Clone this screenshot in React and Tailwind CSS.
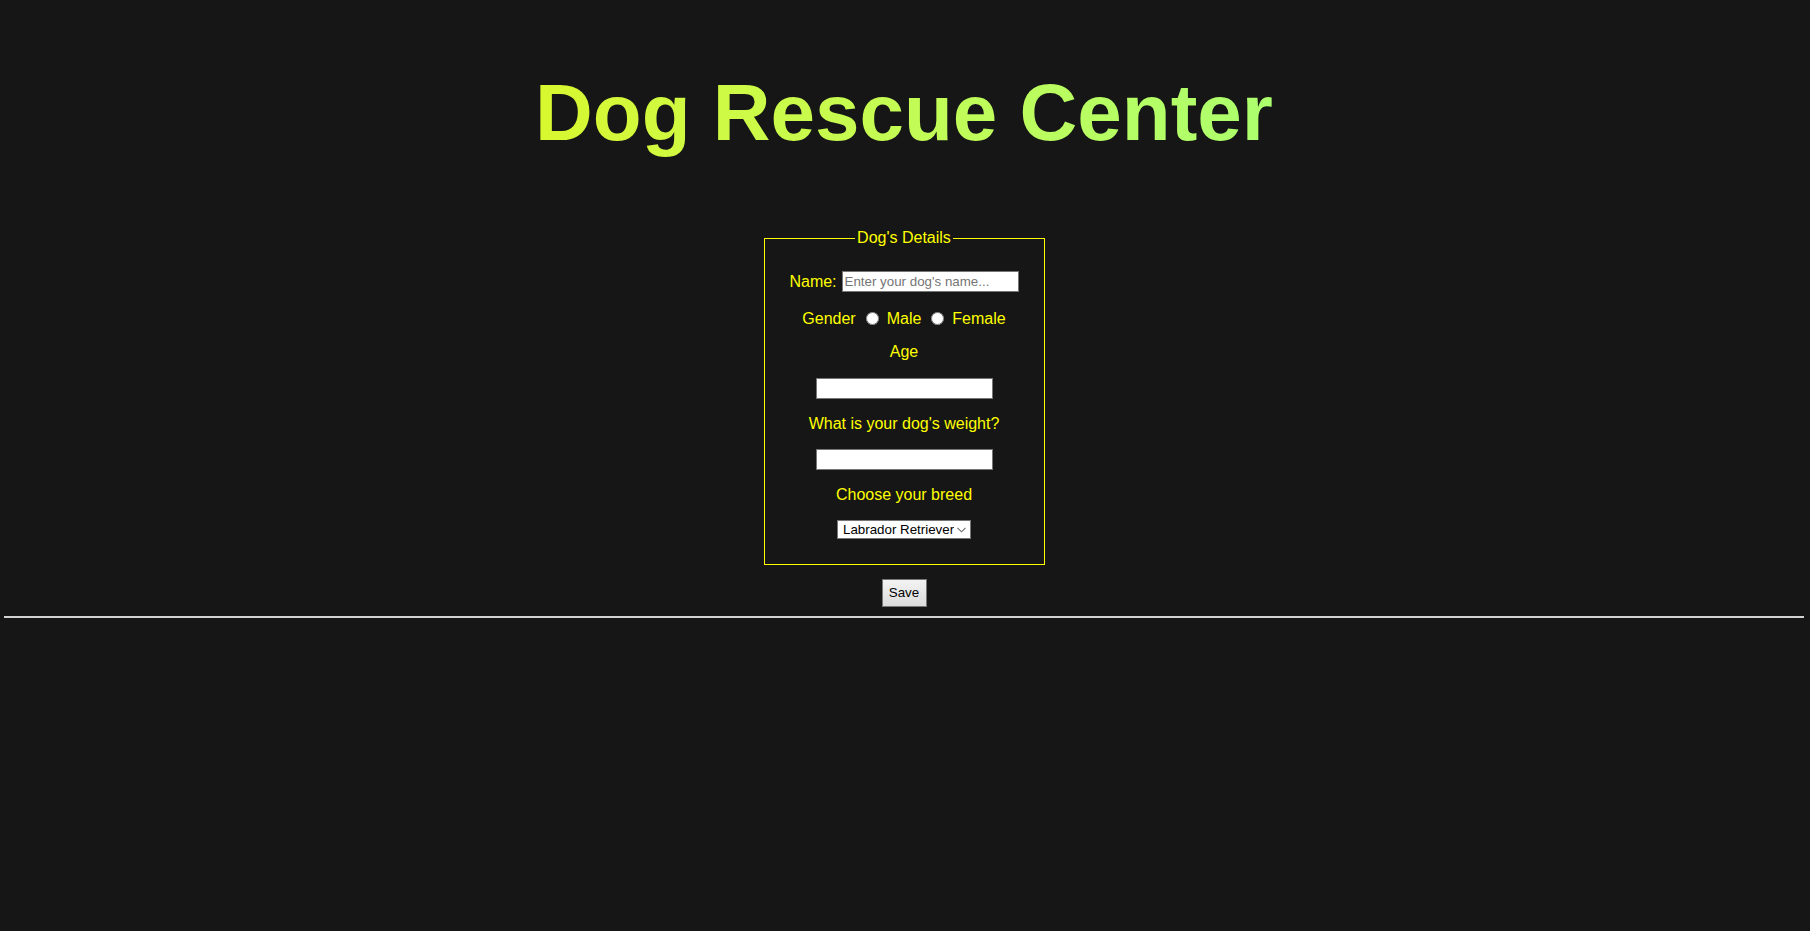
import { useState } from 'react';

const BREEDS = ['Labrador Retriever', 'German Shepherd', 'Golden Retriever', 'Bulldog', 'Beagle', 'Poodle'];

const inputCls =
  'block bg-white border border-[#767676] w-[177px] h-[21px] px-[2px] text-[13.33px] text-black outline-none placeholder:text-[#757575]';

export default function App() {
  const [gender, setGender] = useState('');

  return (
    <div
      className="min-h-[931px] bg-[#161616] pl-1 pr-1.5 text-center text-[16px] text-[#ffff00]"
      style={{ fontFamily: '"Liberation Sans", Arial, sans-serif' }}
    >
      <div className="pt-[67px] flex justify-center">
        <h1 className="inline-block text-[80px] leading-[92px] font-bold bg-linear-to-r from-[#d8f82e] to-[#acff6e] bg-clip-text text-transparent">
          Dog Rescue Center
        </h1>
      </div>

      <form className="flex flex-col items-center" onSubmit={(e) => e.preventDefault()}>
        <fieldset className="mt-[70px] w-[281px] border border-[#ffff00] pt-6 pb-[25px] flex flex-col items-center">
          <legend className="mx-auto px-[2px] leading-[18px]">Dog's Details</legend>

          <div className="flex items-center justify-center h-[21px] gap-[5px]">
            <label htmlFor="name" className="leading-[18px]">Name:</label>
            <input id="name" type="text" placeholder="Enter your dog's name..." className={inputCls} />
          </div>

          <div className="mt-[18px] flex items-center justify-center h-[18px] leading-[18px]">
            <span>Gender</span>
            <input
              type="radio"
              name="gender"
              checked={gender === 'male'}
              onChange={() => setGender('male')}
              className="ml-[10px] mr-[8px] w-[13px] h-[13px] -mt-px"
            />
            <span>Male</span>
            <input
              type="radio"
              name="gender"
              checked={gender === 'female'}
              onChange={() => setGender('female')}
              className="ml-[10px] mr-[8px] w-[13px] h-[13px] -mt-px"
            />
            <span>Female</span>
          </div>

          <label htmlFor="age" className="mt-[15px] leading-[18px]">Age</label>
          <input id="age" type="text" className={`mt-[17px] ${inputCls}`} />

          <label htmlFor="weight" className="mt-4 leading-[18px]">What is your dog's weight?</label>
          <input id="weight" type="text" className={`mt-4 ${inputCls}`} />

          <label htmlFor="breed" className="mt-4 leading-[18px]">Choose your breed</label>
          <div className="mt-4 relative w-[134px] h-[19px]">
            <select
              id="breed"
              className="appearance-none block w-full h-full bg-white border border-[#767676] pl-[5px] pr-4 text-[13.33px] leading-[17px] text-black outline-none"
            >
              {BREEDS.map((b) => (
                <option key={b}>{b}</option>
              ))}
            </select>
            <svg
              className="pointer-events-none absolute right-[5px] top-[7px]"
              width="9"
              height="6"
              viewBox="0 0 9 6"
              fill="none"
            >
              <path d="M0.5 0.8 L4.5 4.8 L8.5 0.8" stroke="#6d6d6d" strokeWidth="1.1" />
            </svg>
          </div>
        </fieldset>

        <button
          type="submit"
          className="mt-[14px] w-[45px] h-[28px] border border-[#767676] bg-linear-to-b from-[#f3f3f3] to-[#dcdcdc] text-[13.33px] text-black"
        >
          Save
        </button>
      </form>

      <hr className="mt-[9px] border-0 border-t-2 border-[#d2d2d2]" />
    </div>
  );
}
